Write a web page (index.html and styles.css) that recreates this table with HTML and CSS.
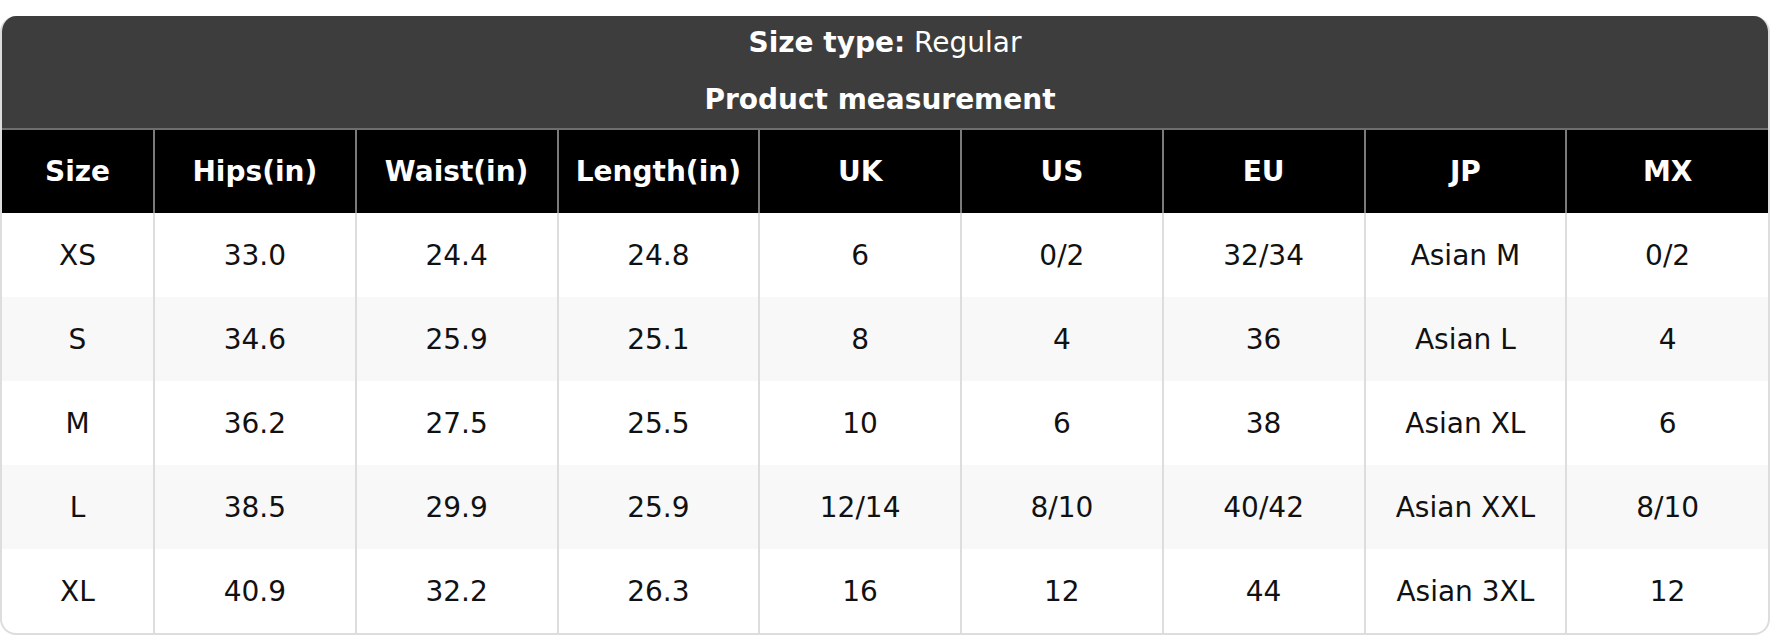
FILE: index.html
```html
<!DOCTYPE html>
<html>
<head>
<meta charset="utf-8">
<link rel="stylesheet" href="styles.css">
</head>
<body>
<div class="chart">
  <div class="caption">
    <div class="line"><b>Size type:</b> Regular</div>
    <div class="line gap title"><b>Product measurement</b></div>
  </div>
  <table class="sizes">
    <colgroup>
      <col class="c-size"><col><col><col><col><col><col><col><col>
    </colgroup>
    <thead>
      <tr><th>Size</th><th>Hips(in)</th><th>Waist(in)</th><th>Length(in)</th><th>UK</th><th>US</th><th>EU</th><th>JP</th><th>MX</th></tr>
    </thead>
    <tbody>
      <tr><td>XS</td><td>33.0</td><td>24.4</td><td>24.8</td><td>6</td><td>0/2</td><td>32/34</td><td>Asian M</td><td>0/2</td></tr>
      <tr><td>S</td><td>34.6</td><td>25.9</td><td>25.1</td><td>8</td><td>4</td><td>36</td><td>Asian L</td><td>4</td></tr>
      <tr><td>M</td><td>36.2</td><td>27.5</td><td>25.5</td><td>10</td><td>6</td><td>38</td><td>Asian XL</td><td>6</td></tr>
      <tr><td>L</td><td>38.5</td><td>29.9</td><td>25.9</td><td>12/14</td><td>8/10</td><td>40/42</td><td>Asian XXL</td><td>8/10</td></tr>
      <tr><td>XL</td><td>40.9</td><td>32.2</td><td>26.3</td><td>16</td><td>12</td><td>44</td><td>Asian 3XL</td><td>12</td></tr>
    </tbody>
  </table>
</div>
</body>
</html>
```
FILE: styles.css
```css
html, body {
  margin: 0;
  padding: 0;
  background: #ffffff;
}
body {
  padding-top: 16px;
  font-family: "DejaVu Sans", "Liberation Sans", sans-serif;
  font-size: 28px;
  color: #111;
}
.chart {
  width: 1770px;
  box-sizing: border-box;
  border: 2px solid #dddddd;
  border-top: none;
  border-radius: 16px;
  overflow: hidden;
  background: #fff;
}
.caption {
  background: #3d3d3d;
  color: #fff;
  text-align: center;
  padding: 10px 0 10px;
  height: 112px;
  box-sizing: border-box;
}
.line {
  height: 34px;
  line-height: 34px;
  font-weight: normal;
}
.line b { font-weight: bold; }
.line.gap { margin-top: 23px; }
.line.title { padding-right: 10px; }
.sizes {
  width: 100%;
  table-layout: fixed;
  border-collapse: collapse;
}
.c-size { width: 152px; }
.sizes th {
  background: #000;
  color: #fff;
  font-weight: bold;
  height: 84px;
  padding: 0;
  border-top: 2px solid #6e6e6e;
  border-left: 2px solid #7a7a7a;
  text-align: center;
  box-sizing: border-box;
}
.sizes th:first-child, .sizes td:first-child { border-left: none; }
.sizes td {
  height: 84px;
  padding: 0;
  text-align: center;
  border-left: 2px solid #dddddd;
  box-sizing: border-box;
}
.sizes tbody tr:nth-child(even) td { background: #f8f8f8; }
```
